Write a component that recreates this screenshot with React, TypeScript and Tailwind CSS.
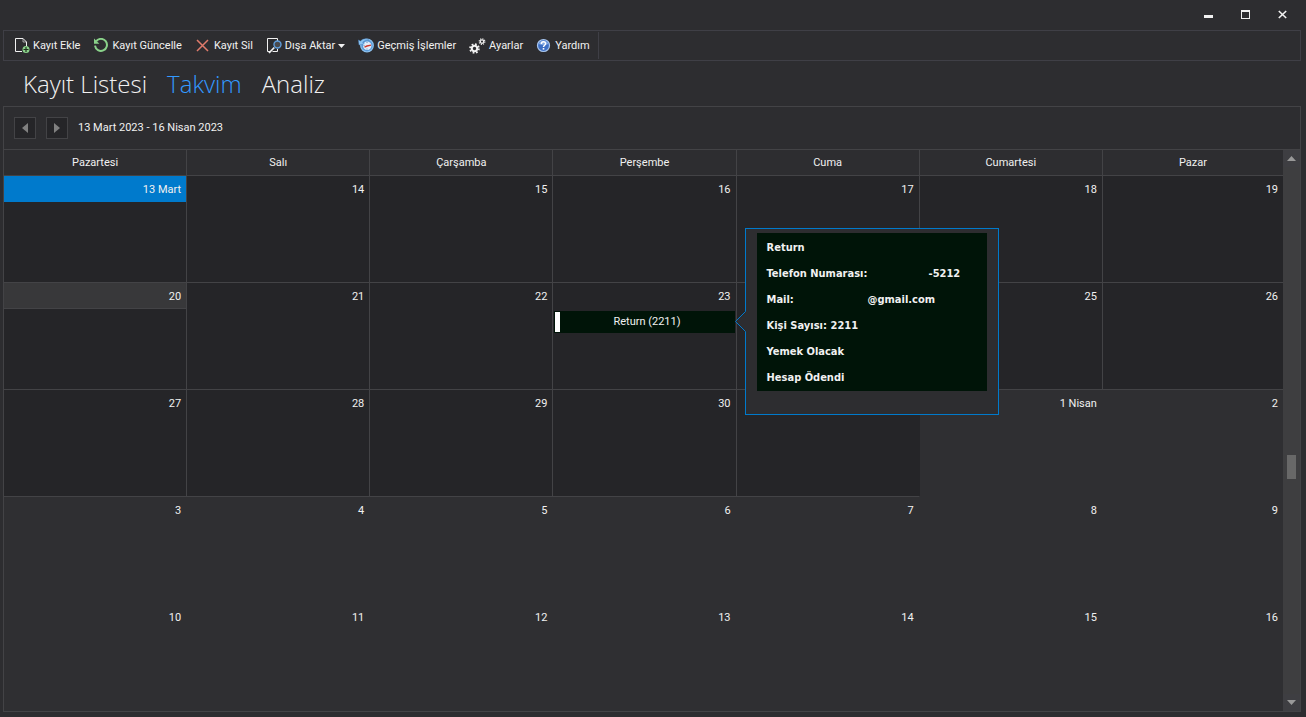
import type { ReactNode } from "react";

const weekDays = ["Pazartesi", "Salı", "Çarşamba", "Perşembe", "Cuma", "Cumartesi", "Pazar"];

type Day = {
  label: string;
  month: "mart" | "nisan";
  state?: "selected" | "today";
  event?: boolean;
};

const m = (label: string, extra: Partial<Day> = {}): Day => ({ label, month: "mart", ...extra });
const n = (label: string): Day => ({ label, month: "nisan" });

const weeks: Day[][] = [
  [m("13 Mart", { state: "selected" }), m("14"), m("15"), m("16"), m("17"), m("18"), m("19")],
  [m("20", { state: "today" }), m("21"), m("22"), m("23", { event: true }), m("24"), m("25"), m("26")],
  [m("27"), m("28"), m("29"), m("30"), m("31"), n("1 Nisan"), n("2")],
  [n("3"), n("4"), n("5"), n("6"), n("7"), n("8"), n("9")],
  [n("10"), n("11"), n("12"), n("13"), n("14"), n("15"), n("16")],
];

function AddIcon() {
  return (
    <svg width="16" height="16" viewBox="0 0 16 16" fill="none">
      <path d="M8 13.5H1.5V0.5H9L12.5 4V8" stroke="#f1f1f1" />
      <path d="M9 0.5V4H12.5" stroke="#f1f1f1" strokeWidth="0.6" />
      <circle cx="12" cy="11.5" r="3.5" fill="#8ad28a" />
      <path d="M12 9V14M9.5 11.5H14.5" stroke="#20301f" strokeWidth="1.2" />
    </svg>
  );
}

function RefreshIcon() {
  return (
    <svg width="16" height="16" viewBox="0 0 16 16" fill="none">
      <path d="M3.2 3.2A6 6 0 1 1 2 7.7" stroke="#8ad28a" strokeWidth="2" />
      <path d="M1 0.4V5.8H6.4Z" fill="#8ad28a" />
    </svg>
  );
}

function DeleteIcon() {
  return (
    <svg width="16" height="16" viewBox="0 0 16 16" fill="none">
      <path d="M2 2L13 13M13 2L2 13" stroke="#e07b6c" strokeWidth="1.5" />
    </svg>
  );
}

function ExportIcon() {
  return (
    <svg width="16" height="16" viewBox="0 0 16 16" fill="none">
      <path d="M4 13.5H1.5V0.5H11.5V3M11.5 11V13.5H6.5" stroke="#f1f1f1" />
      <path d="M3 15L8.3 9.5" stroke="#f1f1f1" strokeWidth="1.8" />
      <circle cx="11.5" cy="6.5" r="3.5" fill="#4a4a4d" stroke="#5f9ddb" strokeWidth="1.4" />
    </svg>
  );
}

function HistoryIcon() {
  return (
    <svg width="16" height="16" viewBox="0 0 16 16" fill="none">
      <circle cx="9" cy="7.5" r="6.3" fill="#5b9bd8" stroke="#8cc0ee" strokeWidth="1.2" />
      <circle cx="9.2" cy="7.8" r="4.2" fill="#e3eefa" />
      <path d="M9 4V5M9 10.5V11.5M5.5 7.5H6.5" stroke="#4a78ad" strokeWidth="0.8" />
      <path d="M6.5 9.1L9 8L13 7.1" stroke="#c9392f" strokeWidth="1.4" />
      <path d="M0.4 1.9L1 7.1L6.4 5.7L4.6 4.4C5.8 2.8 8.4 1.9 11.4 2.1C8.4 0.1 4.8 0.5 2.6 3.1Z" fill="#8cc4f2" stroke="#3f7ab8" strokeWidth="0.4" />
    </svg>
  );
}

function GearsIcon() {
  return (
    <svg width="17" height="16" viewBox="0 0 17 16" fill="none">
      <circle cx="5.5" cy="10.5" r="2.7" stroke="#f1f1f1" strokeWidth="2" />
      <circle cx="5.5" cy="10.5" r="4.4" stroke="#f1f1f1" strokeWidth="1.8" strokeDasharray="1.728 1.728" />
      <circle cx="13" cy="3.6" r="1.7" stroke="#f1f1f1" strokeWidth="1.2" />
      <circle cx="13" cy="3.6" r="2.8" stroke="#f1f1f1" strokeWidth="1.2" strokeDasharray="1.1 1.1" />
    </svg>
  );
}

function HelpIcon() {
  return (
    <svg width="16" height="16" viewBox="0 0 16 16" fill="none">
      <circle cx="7.5" cy="7.5" r="6" fill="#3d6fc4" stroke="#a9c6ee" strokeWidth="1.2" />
      <path d="M2.7 6A5 5 0 0 1 12.3 6C9.5 7.5 5.5 7.5 2.7 6Z" fill="#7ea6e2" />
      <path d="M5.4 5.9C5.4 3.1 9.6 3.2 9.6 5.7C9.6 7.2 7.5 7.3 7.5 9" stroke="#ffffff" strokeWidth="1.5" />
      <rect x="6.7" y="10" width="1.6" height="1.6" fill="#ffffff" />
    </svg>
  );
}

function ToolButton({ icon, label, menu }: { icon: ReactNode; label: string; menu?: boolean }) {
  return (
    <button type="button" className="flex h-7 items-center gap-[3px] whitespace-nowrap">
      {icon}
      <span className="pt-px">{label}</span>
      {menu && (
        <svg width="7" height="4" viewBox="0 0 7 4">
          <path d="M0 0H7L3.5 4Z" fill="#f1f1f1" />
        </svg>
      )}
    </button>
  );
}

function EventPopover() {
  return (
    <div
      role="tooltip"
      className="absolute -top-[83px] left-full z-10 ml-[10px] h-[187px] w-[254px] border border-[#007acc] bg-[#2d2d30] pt-1 pl-[11px] text-left font-['DejaVu_Sans_Condensed','DejaVu_Sans',sans-serif] font-bold"
    >
      <svg width="11" height="21" viewBox="0 0 11 21" className="absolute top-[82px] -left-[11px]">
        <path d="M11 0L1 10.5L11 21Z" fill="#2d2d30" />
        <path d="M10.5 0.5L0.5 10.5L10.5 20.5" fill="none" stroke="#007acc" />
      </svg>
      <div className="w-[230px] bg-[#001408] pt-[2px] pl-[10px] leading-[26px] whitespace-nowrap">
        <p>Return</p>
        <p className="flex">
          <span className="w-[162px]">Telefon Numarası:</span>-5212
        </p>
        <p className="flex">
          <span className="w-[101px]">Mail:</span>@gmail.com
        </p>
        <p className="flex">
          <span className="w-16">Kişi Sayısı:</span>2211
        </p>
        <p>Yemek Olacak</p>
        <p>Hesap Ödendi</p>
      </div>
    </div>
  );
}

function DayCell({ day, row, col }: { day: Day; row: number; col: number }) {
  const inMonth = day.month === "mart";
  const next = weeks[row][col + 1];
  const rightLine = inMonth && next && next.month === "mart";
  return (
    <td
      className={`h-[107px] border-b p-0 align-top ${inMonth ? "border-b-[#434346] bg-[#252528]" : "border-b-transparent bg-[#2f2f32]"} ${
        col < 6 ? "border-r" : ""
      } ${rightLine ? "border-r-[#434346]" : "border-r-transparent"}`}
    >
      <div
        className={`h-[26px] pt-[2px] pr-[5px] text-right leading-6 ${
          day.state === "selected" ? "bg-[#007acc]" : day.state === "today" ? "border-b border-[#434346] bg-[#38383a]" : ""
        }`}
      >
        {day.label}
      </div>
      {day.event && (
        <div className="relative mx-px mt-[2px] h-[22px]">
          <button type="button" className="flex h-full w-full items-center bg-[#001408] p-px">
            <span className="h-full w-[5px] bg-white" />
            <span className="flex-1 pt-px text-center">Return (2211)</span>
          </button>
          <EventPopover />
        </div>
      )}
    </td>
  );
}

export default function App() {
  return (
    <div className="flex min-h-screen flex-col bg-[#2d2d30] pr-[5px] pb-[5px] pl-[3px] font-[Roboto,'Noto_Sans',sans-serif] text-[11px] text-[#f1f1f1]">
      <header className="flex h-[30px] justify-end">
        <button type="button" aria-label="Simge durumuna küçült" className="flex w-[37px] items-center justify-center pt-[2px]">
          <span className="h-[3px] w-[9px] bg-[#f1f1f1]" />
        </button>
        <button type="button" aria-label="Ekranı kapla" className="flex w-[37px] items-center justify-center pb-px">
          <span className="h-[9px] w-[9px] border border-t-2 border-[#f1f1f1]" />
        </button>
        <button type="button" aria-label="Kapat" className="flex w-[37px] items-center justify-center pb-px">
          <svg width="9" height="9" viewBox="0 0 9 9">
            <path d="M0.8 1L8.2 8M8.2 1L0.8 8" stroke="#f1f1f1" strokeWidth="1.6" />
          </svg>
        </button>
      </header>

      <nav aria-label="Araç çubuğu" className="flex h-[31px] items-center border border-[#3f3f46] pl-[10px]">
        <div className="flex h-[27px] items-center gap-[13px] border-r border-[#3f3f46] pr-2">
          <ToolButton icon={<AddIcon />} label="Kayıt Ekle" />
          <ToolButton icon={<RefreshIcon />} label="Kayıt Güncelle" />
          <ToolButton icon={<DeleteIcon />} label="Kayıt Sil" />
          <ToolButton icon={<ExportIcon />} label="Dışa Aktar" menu />
          <ToolButton icon={<HistoryIcon />} label="Geçmiş İşlemler" />
          <ToolButton icon={<GearsIcon />} label="Ayarlar" />
          <ToolButton icon={<HelpIcon />} label="Yardım" />
        </div>
      </nav>

      <div role="tablist" className="flex h-[45px] items-center gap-5 pt-px pl-5 font-['Open_Sans',sans-serif] text-2xl font-light">
        <button type="button" role="tab" aria-selected="false">Kayıt Listesi</button>
        <button type="button" role="tab" aria-selected="true" className="text-[#3399ff]">Takvim</button>
        <button type="button" role="tab" aria-selected="false">Analiz</button>
      </div>

      <main className="flex flex-1 flex-col border border-[#434346]">
        <div className="flex h-[42px] items-center gap-[10px] pl-[10px]">
          <button type="button" aria-label="Önceki" className="flex h-[22px] w-[22px] items-center justify-center border border-[#434346] bg-[#252528]">
            <svg width="6" height="10" viewBox="0 0 6 10"><path d="M6 0V10L0 5Z" fill="#808080" /></svg>
          </button>
          <button type="button" aria-label="Sonraki" className="flex h-[22px] w-[22px] items-center justify-center border border-[#434346] bg-[#252528]">
            <svg width="6" height="10" viewBox="0 0 6 10"><path d="M0 0V10L6 5Z" fill="#808080" /></svg>
          </button>
          <span className="pt-px">13 Mart 2023 - 16 Nisan 2023</span>
        </div>

        <div className="flex flex-1 border-t border-[#434346]">
          <div className="min-w-0 flex-1">
            <table className="w-full table-fixed border-separate border-spacing-0">
              <colgroup>
                {weekDays.map((day, i) => (
                  <col key={day} className={i < 6 ? "w-[14.32%]" : ""} />
                ))}
              </colgroup>
              <thead>
                <tr>
                  {weekDays.map((day, i) => (
                    <th key={day} scope="col" className={`h-[26px] border-b border-[#434346] p-0 pt-[2px] font-normal ${i < 6 ? "border-r" : ""}`}>
                      {day}
                    </th>
                  ))}
                </tr>
              </thead>
              <tbody>
                {weeks.map((week, row) => (
                  <tr key={row}>
                    {week.map((day, col) => (
                      <DayCell key={col} day={day} row={row} col={col} />
                    ))}
                  </tr>
                ))}
              </tbody>
            </table>
          </div>
          <div role="scrollbar" aria-label="Takvim kaydırma" aria-controls="root" aria-valuenow={52} className="flex w-[17px] flex-col items-center bg-[#3e3e40]">
            <button type="button" aria-label="Yukarı" className="flex h-[17px] w-full items-center justify-center bg-[#3e3e42]">
              <svg width="9" height="5" viewBox="0 0 9 5"><path d="M0 5H9L4.5 0Z" fill="#999999" /></svg>
            </button>
            <div className="grow-[288]" />
            <div className="h-6 w-[9px] bg-[#686868]" />
            <div className="grow-[215]" />
            <button type="button" aria-label="Aşağı" className="flex h-[17px] w-full items-center justify-center bg-[#3e3e42]">
              <svg width="9" height="5" viewBox="0 0 9 5"><path d="M0 0H9L4.5 5Z" fill="#999999" /></svg>
            </button>
          </div>
        </div>
      </main>
    </div>
  );
}
